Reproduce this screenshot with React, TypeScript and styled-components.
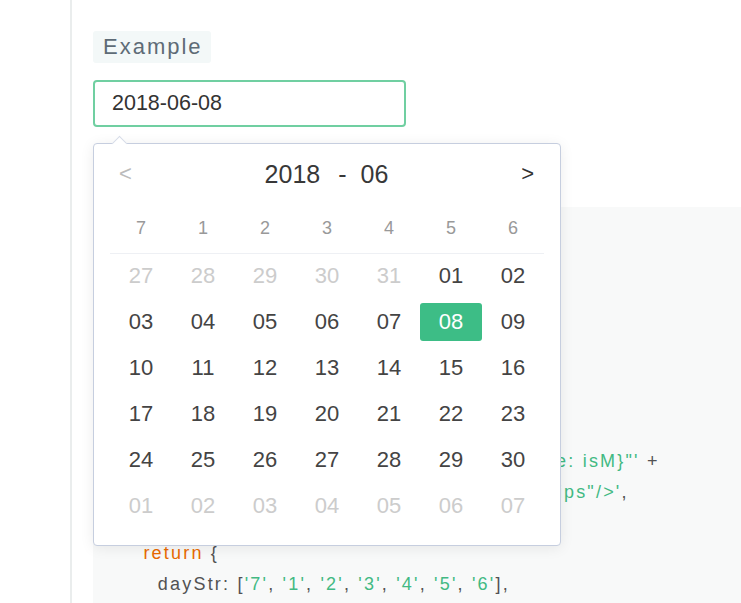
import styled, { createGlobalStyle } from 'styled-components';

const GlobalStyle = createGlobalStyle`
  html, body {
    margin: 0;
    padding: 0;
    background: #ffffff;
    overflow: hidden;
  }
  body {
    font-family: "Liberation Sans", Arial, sans-serif;
  }
`;

const weekDays = ['7', '1', '2', '3', '4', '5', '6'];

type Day = { label: string; other?: boolean; selected?: boolean };

const buildDays = (): Day[] => {
  const days: Day[] = [];
  [27, 28, 29, 30, 31].forEach(d => days.push({ label: String(d), other: true }));
  for (let d = 1; d <= 30; d++) {
    days.push({ label: d < 10 ? `0${d}` : String(d), selected: d === 8 });
  }
  for (let d = 1; d <= 7; d++) days.push({ label: `0${d}`, other: true });
  return days;
};

const Page = styled.div`
  display: flex;
  height: 603px;
  overflow: hidden;
`;

const Rail = styled.div`
  width: 70px;
  flex-shrink: 0;
  border-right: 2px solid #eaeded;
`;

const Content = styled.div`
  flex: 1;
  padding: 31px 0 0 21px;
  min-width: 0;
`;

const Label = styled.div`
  display: inline-block;
  height: 32px;
  line-height: 32px;
  padding: 0 8px 0 10px;
  background: #f3f8f8;
  border-radius: 3px;
  color: #5e6b76;
  font-size: 22px;
  letter-spacing: 2px;
`;

const Field = styled.div`
  position: relative;
  margin-top: 17px;
  width: 313px;
`;

const Input = styled.input`
  box-sizing: border-box;
  width: 313px;
  height: 47px;
  border: 2px solid #70cfa1;
  border-radius: 4px;
  padding: 0 0 0 17px;
  outline: none;
  font-family: "Liberation Sans", Arial, sans-serif;
  font-size: 21.5px;
  color: #333333;
`;

const Popup = styled.div`
  position: absolute;
  top: 63px;
  left: 0;
  z-index: 10;
  box-sizing: border-box;
  width: 468px;
  height: 403px;
  padding: 0 16px;
  background: #ffffff;
  border: 1px solid #c6cedf;
  border-radius: 4px;
  box-shadow: 0 2px 14px rgba(0, 0, 0, 0.08);

  &::before {
    content: '';
    position: absolute;
    top: -6px;
    left: 20px;
    width: 10px;
    height: 10px;
    background: #ffffff;
    border-top: 1px solid #d6dce8;
    border-left: 1px solid #d6dce8;
    transform: rotate(45deg);
  }
`;

const Header = styled.div`
  display: flex;
  align-items: center;
  justify-content: space-between;
  height: 59px;
  padding: 0 10px 0 9px;
`;

const Nav = styled.span<{ $muted?: boolean }>`
  font-size: 22px;
  color: ${p => (p.$muted ? '#bbbbbb' : '#333333')};
  cursor: pointer;
`;

const Title = styled.div`
  font-size: 25px;
  color: #383838;
  display: flex;
  align-items: center;
  margin-top: 2px;
`;

const Dash = styled.span`
  margin: 0 14px 0 18px;
`;

const Grid = styled.div`
  display: grid;
  grid-template-columns: repeat(7, 62px);
`;

const WeekRow = styled(Grid)`
  height: 50px;
  border-bottom: 1px solid #eef0f4;
`;

const DayGrid = styled(Grid)`
  margin-top: -1px;
`;

const WeekCell = styled.div`
  display: flex;
  align-items: center;
  justify-content: center;
  font-size: 18px;
  color: #999999;
`;

const DayCell = styled.div<{ $other?: boolean; $selected?: boolean }>`
  display: flex;
  align-items: center;
  justify-content: center;
  height: 46px;
  font-size: 22px;
  color: ${p => (p.$selected ? '#ffffff' : p.$other ? '#cccccc' : '#444444')};
  cursor: pointer;

  span {
    display: flex;
    align-items: center;
    justify-content: center;
    width: 62px;
    height: 38px;
    border-radius: 3px;
    background: ${p => (p.$selected ? '#3dbd86' : 'transparent')};
  }
`;

const Code = styled.pre`
  margin: 80px 0 0 0;
  padding: 25px 0 0 36px;
  background: #f8f9f9;
  height: 420px;
  overflow: hidden;
  font-family: "Liberation Sans", Arial, sans-serif;
  font-size: 18px;
  line-height: 30.6px;
  letter-spacing: 2.2px;
  color: #525252;
  white-space: pre;
`;

const Str = styled.span`
  color: #42b983;
`;

const Kw = styled.span`
  color: #e96900;
`;

export default function App() {
  const days = buildDays();

  return (
    <>
      <GlobalStyle />
      <Page>
        <Rail />
        <Content>
          <Label>Example</Label>
          <Field>
            <Input value="2018-06-08" readOnly />
            <Popup>
              <Header>
                <Nav $muted>&lt;</Nav>
                <Title>
                  <span>2018</span>
                  <Dash>-</Dash>
                  <span>06</span>
                </Title>
                <Nav>&gt;</Nav>
              </Header>
              <WeekRow>
                {weekDays.map(w => (
                  <WeekCell key={w}>{w}</WeekCell>
                ))}
              </WeekRow>
              <DayGrid>
                {days.map((d, i) => (
                  <DayCell key={i} $other={d.other} $selected={d.selected}>
                    <span>{d.label}</span>
                  </DayCell>
                ))}
              </DayGrid>
            </Popup>
          </Field>
          <Code>
            <Kw>export default</Kw>
            {' {\n'}
            {'  data () {\n'}
            {'    '}<Kw>const</Kw>{' isM = '}<Kw>this</Kw>{'.isMobile\n'}
            {'    '}<Kw>const</Kw>{' fmt = '}<Str>{"'yyyy-MM-dd'"}</Str>{'\n'}
            {'    '}<Kw>const</Kw>{' tpl = '}<Str>{"'<date-picker'"}</Str>{' +\n'}
            {'      '}<Str>{`' v-model="date"'`}</Str>{' +\n'}
            {'      '}<Str>{`' :format="fmt"'`}</Str>{' +\n'}
            {'      '}<Str>{`' :lang="zh" :date="dt" :option="{mobile: isM}"'`}</Str>{' +\n'}
            {'      '}<Str>{`' :readonly="true" class="date-picker-tips"/>'`}</Str>{',\n'}
            {'\n'}
            {'  '}<Kw>return</Kw>{' {\n'}
            {'    dayStr: ['}
            <Str>{"'7'"}</Str>{', '}<Str>{"'1'"}</Str>{', '}<Str>{"'2'"}</Str>{', '}<Str>{"'3'"}</Str>{', '}
            <Str>{"'4'"}</Str>{', '}<Str>{"'5'"}</Str>{', '}<Str>{"'6'"}</Str>{'],\n'}
            {'    date: '}<Str>{"'2018-06-08'"}</Str>{'\n'}
            {'  }\n'}
          </Code>
        </Content>
      </Page>
    </>
  );
}
